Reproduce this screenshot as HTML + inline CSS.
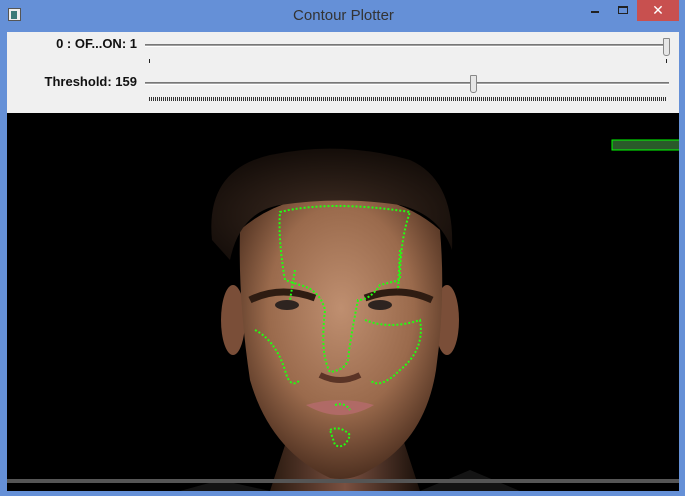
<!DOCTYPE html>
<html><head><meta charset="utf-8"><style>
*{margin:0;padding:0;box-sizing:border-box}
body{width:685px;height:496px;overflow:hidden;background:#6590d7;font-family:"Liberation Sans",sans-serif;position:relative}
.title{position:absolute;left:0;top:0;width:685px;height:31px;text-align:center;font-size:15px;line-height:31px;color:#333;padding-left:2px}
.close{position:absolute;left:637px;top:0;width:42px;height:21px;background:#c8504f;color:#fff;text-align:center;font-size:14px;line-height:21px}
.ctrl{position:absolute;left:7px;top:32px;width:672px;height:81px;background:#f0f0f0}
.lab{position:absolute;font-size:13px;font-weight:bold;color:#111;right:542px}
.track{position:absolute;height:3px;background:#a0a0a0;border-bottom:1px solid #fff;border-top:1px solid #777}
.thumb{position:absolute;width:7px;height:18px;background:#e6e6e6;border:1px solid #888;border-radius:1px 1px 3px 3px}
.img{position:absolute;left:7px;top:113px;width:672px;height:378px;background:#000;overflow:hidden}
</style></head><body>
<div style="position:absolute;left:8px;top:8px;width:13px;height:13px;background:#eee;border:1px solid #555"><div style="margin:2px;width:6px;height:8px;background:#3a7a78"></div></div>
<div class="title">Contour Plotter</div>
<div style="position:absolute;left:591px;top:11px;width:8px;height:2px;background:#222"></div>
<div style="position:absolute;left:618px;top:6px;width:10px;height:8px;border:1px solid #222;border-top-width:2px"></div>
<div class="close">✕</div>
<div class="ctrl">
<div class="lab" style="top:4px">0 : OF...ON: 1</div>
<div class="track" style="left:138px;top:12px;width:524px"></div>
<div class="thumb" style="left:656px;top:6px"></div>
<div style="position:absolute;left:142px;top:27px;width:1px;height:4px;background:#222"></div>
<div style="position:absolute;left:659px;top:27px;width:1px;height:4px;background:#222"></div>
<div class="lab" style="top:42px">Threshold: 159</div>
<div class="track" style="left:138px;top:50px;width:524px"></div>
<div class="thumb" style="left:463px;top:43px"></div>
<div style="position:absolute;left:142px;top:65px;width:518px;height:4px;background:repeating-linear-gradient(90deg,#333 0 1px,transparent 1px 2px)"></div>
</div>
<div class="img">
<svg width="672" height="378" viewBox="7 113 672 378">
<defs>
<radialGradient id="sk" cx="0.5" cy="0.4" r="0.6"><stop offset="0" stop-color="#bf8f70"/><stop offset="0.6" stop-color="#9a6a4c"/><stop offset="1" stop-color="#4e3020"/></radialGradient>
<radialGradient id="hr" cx="0.5" cy="0.6" r="0.6"><stop offset="0" stop-color="#3e2c22"/><stop offset="1" stop-color="#140d09"/></radialGradient>
<linearGradient id="nk" x1="0" x2="1"><stop offset="0" stop-color="#2a1a10"/><stop offset="0.5" stop-color="#7a5040"/><stop offset="1" stop-color="#1a100a"/></linearGradient>
</defs>
<path d="M290 430 L270 491 L420 491 L400 430Z" fill="url(#nk)"/>
<path d="M220 480 L180 491 L270 491Z M470 470 L520 491 L420 491Z" fill="#141414"/>
<ellipse cx="233" cy="320" rx="12" ry="35" fill="#7a4e38"/>
<ellipse cx="447" cy="320" rx="12" ry="35" fill="#7a4e38"/>
<path d="M240 230 Q238 300 250 380 Q270 450 330 478 Q350 482 370 470 Q425 440 436 370 Q446 300 440 230 Q400 195 340 195 Q280 195 240 230Z" fill="url(#sk)"/>
<path d="M212 240 Q205 170 270 155 Q340 140 410 160 Q455 180 452 250 Q440 215 400 205 Q340 196 280 205 Q240 212 230 260Z" fill="url(#hr)"/>
<path d="M250 300 Q280 285 315 298 M365 298 Q400 285 432 300" stroke="#2e1c12" stroke-width="7" fill="none"/>
<ellipse cx="287" cy="305" rx="12" ry="5" fill="#2e2420"/><ellipse cx="380" cy="305" rx="12" ry="5" fill="#2e2420"/>
<path d="M320 375 Q340 385 360 375" stroke="#5a3426" stroke-width="6" fill="none"/>
<path d="M306 405 Q340 395 374 405 Q340 425 306 405Z" fill="#b06a66"/>
<rect x="7" y="479" width="672" height="4" fill="#555"/>
<rect x="612" y="140" width="68" height="10" fill="#2a5a2a" stroke="#0f0" stroke-width="1"/>
<g fill="none" stroke="#22ff11" stroke-width="2" stroke-dasharray="2 2">
<path d="M280 212 Q330 200 410 212 Q400 240 400 280 L380 285 Q370 300 358 300 Q350 340 348 360 Q345 370 330 372 Q320 355 325 310 Q320 290 300 285 L285 280 Q278 240 280 212Z"/>
<path d="M255 330 Q275 340 285 370 Q290 390 300 380 M365 320 Q390 330 420 320 Q425 350 400 370 Q380 390 370 380"/>
<path d="M330 430 Q340 425 350 435 Q345 450 335 445Z M335 405 Q345 402 350 410"/>
<path d="M295 270 L290 300 M400 250 L398 290"/>
</g>
</svg>
</div>
</body></html>
